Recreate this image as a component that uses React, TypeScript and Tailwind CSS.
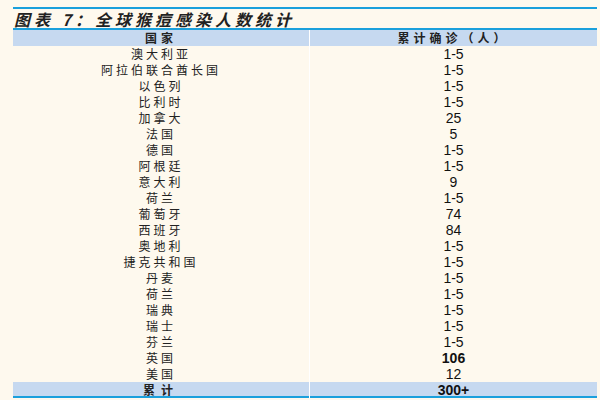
const rows: [string, string, boolean?][] = [
  ["澳大利亚", "1-5"], ["阿拉伯联合酋长国", "1-5"], ["以色列", "1-5"], ["比利时", "1-5"],
  ["加拿大", "25"], ["法国", "5"], ["德国", "1-5"], ["阿根廷", "1-5"], ["意大利", "9"],
  ["荷兰", "1-5"], ["葡萄牙", "74"], ["西班牙", "84"], ["奥地利", "1-5"], ["捷克共和国", "1-5"],
  ["丹麦", "1-5"], ["荷兰", "1-5"], ["瑞典", "1-5"], ["瑞士", "1-5"], ["芬兰", "1-5"],
  ["英国", "106", true], ["美国", "12"],
];
const cjk = { fontFamily: '"Noto Sans CJK SC", sans-serif' };
const num = { fontFamily: '"Liberation Sans", Arial, sans-serif' };
export default function App() {
  return (
    <div className="w-[600px] h-[400px] bg-[#fef9ee] pt-[7px] pl-[13px] pr-[3px] overflow-hidden">
      <div className="border-t-2 border-[#1aa0dc] h-[21px] flex items-center">
        <span className="text-[16px] font-bold italic text-[#222] tracking-[4px] leading-none pl-[1px]" style={cjk}>图表 7：全球猴痘感染人数统计</span>
      </div>
      <div className="border-t-2 border-[#1aa0dc]">
        <div className="grid grid-cols-[297px_1fr] h-[16px] bg-[#c6d9f0] text-[12px] font-bold text-[#222] leading-[16px] tracking-[4px]" style={cjk}>
          <div className="text-center border-r border-white">国家</div>
          <div className="text-center">累计确诊（人）</div>
        </div>
        {rows.map(([c, v, b], i) => (
          <div key={i} className="grid grid-cols-[297px_1fr] h-[16px] leading-[16px]">
            <div className="text-center text-[12px] text-[#222] tracking-[3px] border-r border-white" style={cjk}>{c}</div>
            <div className={`text-center text-[14px] text-[#111] ${b ? "font-bold" : ""}`} style={num}>{v}</div>
          </div>
        ))}
        <div className="grid grid-cols-[297px_1fr] h-[16px] leading-[16px] bg-[#c6d9f0] border-b-2 border-[#1aa0dc]">
          <div className="text-center text-[12px] font-bold text-[#222] tracking-[6px] border-r border-white" style={cjk}>累计</div>
          <div className="text-center text-[14px] font-bold text-[#111]" style={num}>300+</div>
        </div>
      </div>
    </div>
  );
}
